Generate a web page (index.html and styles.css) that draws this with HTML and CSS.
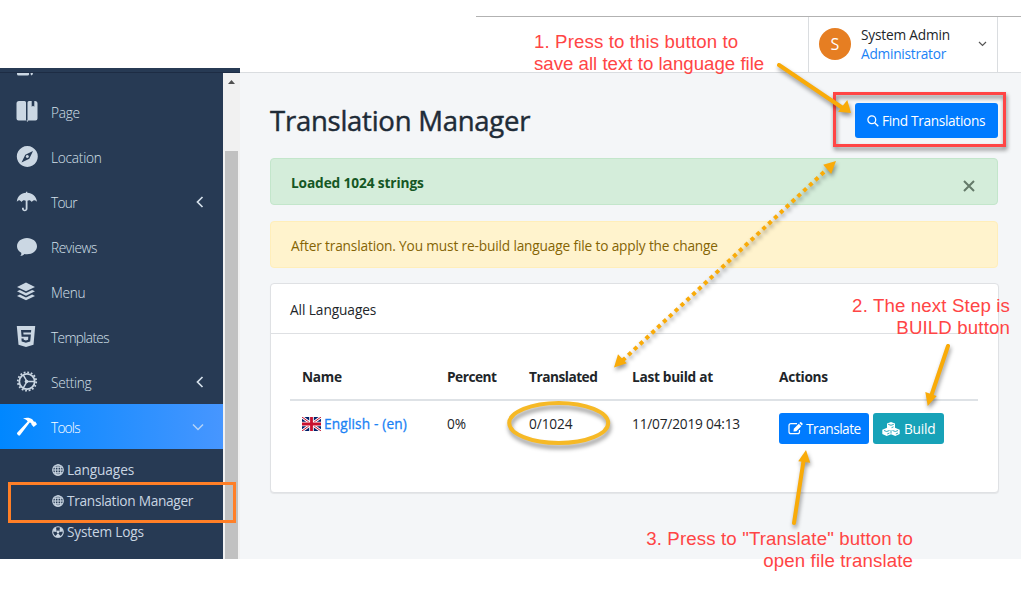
FILE: index.html
```html
<!DOCTYPE html>
<html lang="en">
<head>
<meta charset="utf-8">
<title>Translation Manager</title>
<link rel="stylesheet" href="styles.css">
</head>
<body>
<div class="page">
  <aside class="sidebar">
    <div class="sidebar-top"></div>
    <div class="sidebar-body">
      <nav class="menu">
        <div class="menu-clip"><svg width="22" height="4" viewBox="0 0 22 4"><path d="M1 0h12v1.500q0 1-1.500 1H2.500Q1 2.500 1 1zM14.500 0h2.500q0 2-2 2.500z"/></svg></div>
        <a class="item"><svg class="icon" viewBox="0 0 22 21"><path d="M3 0h5.500q1.500 0 1.500 1.500V19.500H2.500Q.5 19.500 .5 17.500V2.500Q.5 0 3 0zM13 0h2.700v5.800l1.300-1 1.300 1V0H19q2.500 0 2.500 2.500v15q0 2-2 2H12.300l-1 1.500-1-1.500h1.200V1.500Q11.500 0 13 0z"/></svg><span class="t-page">Page</span></a>
        <a class="item"><svg class="icon" viewBox="0 0 22 21"><path fill-rule="evenodd" d="M11.300 0a10.500 10.500 0 1 0 .01 0zM17 5l-3.700 7.700L5.500 16.500l3.800-7.800zM11.300 9a1.500 1.500 0 1 0 .01 0z"/></svg><span class="t-location">Location</span></a>
        <a class="item"><svg class="icon" viewBox="0 0 22 21"><path d="M10 1.800V.8h1.300v1c5 .3 9 3.500 9.700 9-.8-1-1.600-1.500-2.500-1.500s-2 .5-2.700 1.700c-.8-1.100-1.800-1.700-2.700-1.700-.7 0-1.300.3-1.600.5v8c0 3.300-5.500 3.300-5.500 0v-1h1.800v1c0 1.300 1.900 1.300 1.900 0v-8c-.4-.3-1-.5-1.600-.5-.9 0-1.900.6-2.600 1.700C4.700 9.800 3.800 9.300 3 9.300S1.500 9.800.8 10.800c.5-5.500 4.400-8.700 9.200-9z"/></svg><span class="t-tour">Tour</span><svg class="chev" viewBox="0 0 8 12"><path d="M6.500 1 1.500 6l5 5"/></svg></a>
        <a class="item"><svg class="icon" viewBox="0 0 22 21"><path d="M11 2c5.500 0 10 3.600 10 8.200s-4.500 8-10 8c-1 0-1.700-.1-2.500-.3-1 1.200-2.600 2.100-4.200 2.100 1-1 1.200-2 .9-3.200C2.600 15.200 1 13 1 10.200 1 5.600 5.500 2 11 2z"/></svg><span class="t-reviews">Reviews</span></a>
        <a class="item"><svg class="icon" viewBox="0 0 22 21"><path d="m10 1.500 9 4.400-9 4.400-9-4.400zM1 10.300l2.900-1.400L10 11.900l6.100-3 2.900 1.400-9 4.400zM1 14.900l2.900-1.400 6.100 3 6.100-3 2.900 1.400-9 4.400z"/></svg><span class="t-menu">Menu</span></a>
        <a class="item"><svg class="icon" viewBox="0 0 22 21"><path fill-rule="evenodd" d="M.8 0h18.400l-1.700 18.800L10 21l-7.500-2.200zM5 4l.6 6.800h6.700l-.2 3-2.200.7-2.200-.7-.1-1.400H5.400l.3 3 4.200 1.300 4.300-1.300.7-7H7.500l-.2-2H15L15.200 4z"/></svg><span class="t-templates">Templates</span></a>
        <a class="item"><svg class="icon" viewBox="0 0 22 21"><circle class="teeth" cx="11" cy="10.500" r="9.200"/><circle class="ring" cx="11" cy="10.500" r="7.700"/><path class="spokes" d="M11 10.500h7.700M11 10.500 7.200 3.800M11 10.500l-3.800 6.700"/><circle cx="10.500" cy="10.500" r="1.800"/></svg><span class="t-setting">Setting</span><svg class="chev" viewBox="0 0 8 12"><path d="M6.500 1 1.500 6l5 5"/></svg></a>
        <a class="item active"><svg class="icon" viewBox="0 0 22 21"><path d="M7 2.500c3.500-1.500 7-1 9.500 1l1.500 2.200 1.200-.1 1.800 2.600-3.300 2.800-2.200-2.500-.4-1.500-1.400-.4L4 19.300q-.9.800-1.700 0l-1-1.100q-.8-.8.1-1.600L11.700 5.500C10.500 3.500 9 3 7 2.500z"/></svg><span class="t-tools">Tools</span><svg class="chev down" viewBox="0 0 12 8"><path d="m1 1.500 5 5 5-5"/></svg></a>
        <div class="submenu">
          <a><svg class="globe" viewBox="0 0 12 12"><circle cx="6" cy="6" r="5.300"/><ellipse cx="6" cy="6" rx="2.800" ry="5.300"/><path d="M6 .7v10.600M.7 6h10.600M1.700 3.200h8.600M1.700 8.800h8.600"/></svg><span class="t-languages">Languages</span></a>
          <a><svg class="globe" viewBox="0 0 12 12"><circle cx="6" cy="6" r="5.300"/><ellipse cx="6" cy="6" rx="2.800" ry="5.300"/><path d="M6 .7v10.600M.7 6h10.600M1.700 3.200h8.600M1.700 8.800h8.600"/></svg><span class="t-manager">Translation Manager</span></a>
          <a><svg class="globe" viewBox="0 0 12 12"><circle cx="6" cy="6" r="5.300"/><path class="solid" d="M4.700 6 .8 5.500A5.300 5.300 0 0 1 4 1.200zM7.300 6l3.900-.5A5.300 5.300 0 0 0 8 1.200zM6 7l3 3.700q-3 1.500-6 0z"/><circle class="solid" cx="6" cy="5.900" r="1.300"/></svg><span class="t-logs">System Logs</span></a>
        </div>
      </nav>
      <div class="scrollbar"><div class="scroll-up"></div><div class="thumb"></div></div>
    </div>
  </aside>
  <div class="main">
    <header class="topbar">
      <div class="user">
        <div class="avatar">S</div>
        <div class="who"><span class="t-user">System Admin</span><span class="role">Administrator</span></div>
        <svg class="caret" viewBox="0 0 9 6"><path d="m1 1 3.500 3.500L8 1"/></svg>
      </div>
    </header>
    <main class="content">
      <div class="title-row">
        <h1>Translation Manager</h1>
        <button class="btn find"><svg width="12" height="12" viewBox="0 0 12 12"><circle cx="4.800" cy="4.800" r="3.900"/><path d="m7.700 7.700 3.600 3.600"/></svg><span class="t-find">Find Translations</span></button>
      </div>
      <div class="alert success"><strong>Loaded 1024 strings</strong><svg width="12" height="12" viewBox="0 0 12 12"><path d="m1 1 10 10M11 1 1 11"/></svg></div>
      <div class="alert warning"><span>After translation. You must re-build language file to apply the change</span></div>
      <section class="card">
        <div class="card-head"><span class="t-all">All Languages</span></div>
        <div class="card-body">
          <div class="row head"><span class="h-name">Name</span><span class="h-percent">Percent</span><span class="h-trans">Translated</span><span class="h-last">Last build at</span><span class="h-act">Actions</span></div>
          <div class="row data">
            <a class="lang"><svg width="19" height="14" viewBox="0 0 19 14"><path fill="#012169" d="M0 0h19v14H0z"/><path stroke="#fff" stroke-width="2.800" d="m0 0 19 14M19 0 0 14"/><path stroke="#c8102e" stroke-width="1" d="m0 0 19 14M19 0 0 14"/><path stroke="#fff" stroke-width="4.600" d="M9.500 0v14M0 7h19"/><path stroke="#c8102e" stroke-width="2.800" d="M9.500 0v14M0 7h19"/></svg><span class="t-english">English - (en)</span></a>
            <span>0%</span><span class="t-count">0/1024</span><span class="t-date">11/07/2019 04:13</span>
            <div class="actions">
              <button class="btn small translate"><svg width="15" height="13" viewBox="0 0 15 13"><path class="line" d="M9 1.700H3Q1 1.700 1 3.700v6q0 2 2 2h6.500q2 0 2-2V8"/><path class="solid" d="m5.500 9.500.3-2.800 5-5 2.500 2.500-5 5zM11.400 1.100l.8-.8q.5-.4 1 0l1.300 1.300q.5.500 0 1l-.7.900z"/></svg><span class="t-translate">Translate</span></button>
              <button class="btn small build"><svg width="18" height="14" viewBox="0 0 18 14"><path class="solid" d="m9 0 4 1.600v4.100l4.700 2v4.200L13.300 14 9 12.200 4.700 14 .3 11.900V7.700L5 5.700V1.600z"/><path class="cut" d="m6.200 2.300 2.800 1 2.800-1M9.500 5.700l2-.8M2 8.500l2.700 1 2.800-1M5.200 12l2.200-1M10.500 8.500l2.800 1 2.700-1M13.800 12l2.200-1M9 8.200v3.300"/></svg><span class="t-build">Build</span></button>
            </div>
          </div>
        </div>
      </section>
    </main>
  </div>
</div>
<div class="outline menu-outline"></div>
<div class="outline find-outline"></div>
<svg class="arrows" viewBox="0 0 1029 605">
  <g class="arrow"><path d="m779 65 63 42.500"/><path class="tip" d="m851 113-13-1.300 9.300-11.700z"/></g>
  <g class="arrow"><path d="m948 346-16.500 49"/><path class="tip" d="m927.700 406-2.400-14 11.400 4z"/></g>
  <g class="arrow"><path d="m794 523 9.500-62"/><path class="tip" d="m806 450 4.200 12.800-12-1.600z"/></g>
  <g class="arrow"><path class="dots" d="M824 172 622 361"/><path class="tip" d="m836 161-4.800 13-8-9.300zM614 367.500l4-13.200 8.700 9z"/></g>
  <ellipse class="ring-mark" cx="558.700" cy="423" rx="49.500" ry="20"/>
</svg>
<p class="note one"><span>1. Press to this button to</span><br>save all text to language file</p>
<p class="note two">2. The next Step is<br>BUILD button</p>
<p class="note three">3. Press to "Translate" button to<br>open file translate</p>
</body>
</html>
```

FILE: styles.css
```css
* { box-sizing: border-box; }
body { margin: 0; width: 1029px; height: 605px; position: relative; overflow: hidden; background: #fff; color: #212529; font: 13.7px "Open Sans", "Noto Sans", sans-serif; }
svg { display: block; flex: none; }
span, strong, h1 { white-space: nowrap; }
.page { display: grid; grid-template-columns: 240px 781px; height: 559px; }

.sidebar { display: flex; flex-direction: column; padding-top: 68px; height: 559px; }
.sidebar-top { height: 5px; background: #273a54; border-bottom: 1px solid #1d2c44; }
.sidebar-body { display: flex; height: 486px; background: #273a54; }
.menu { width: 223px; overflow: hidden; font-weight: 300; color: #d5e0eb; }
.menu-clip { height: 16px; padding-left: 16px; }
.menu-clip svg { fill: #cbd7e3; }
.item { display: flex; align-items: center; height: 45px; padding: 0 19px 0 16px; }
.item span { padding-top: 1px; }
.icon { width: 22px; height: 21px; margin-right: 13px; fill: #cbd7e3; }
.teeth, .ring, .spokes { fill: none; stroke: #cbd7e3; }
.teeth { stroke-width: 1.800; stroke-dasharray: 1.800 1.812; }
.ring { stroke-width: 1.800; }
.spokes { stroke-width: 1.500; }
.chev { width: 8px; height: 12px; margin-left: auto; fill: none; stroke: #d5e0eb; stroke-width: 1.700; }
.chev.down { width: 12px; height: 8px; stroke: #b5d3f7; stroke-width: 1.500; }
.active { background: linear-gradient(90deg, #0087ff, #4796ff); color: #fff; }
.active .icon { fill: #fff; }
.t-page { letter-spacing: -.3px; }
.t-location { letter-spacing: -.25px; }
.t-tour { letter-spacing: -.7px; }
.t-reviews { letter-spacing: -.4px; }
.t-menu { letter-spacing: -.3px; }
.t-templates { letter-spacing: -.65px; }
.t-setting { letter-spacing: -.3px; }
.t-tools { letter-spacing: -.8px; }
.submenu { padding: 5px 0 0 52px; font-weight: 400; color: #c9d5e2; }
.submenu a { display: flex; align-items: center; height: 31px; gap: 3px; }
.t-languages { letter-spacing: -.12px; }
.t-manager { letter-spacing: -.3px; }
.t-logs { letter-spacing: -.2px; }
.globe { width: 12px; height: 12px; fill: none; stroke: #c9d5e2; stroke-width: 1.100; }
.globe .solid { fill: #c9d5e2; stroke: none; }
.scrollbar { width: 17px; background: #f1f1f1; padding: 7px 2px 0; }
.scroll-up { width: 7px; height: 4px; margin: 0 auto; background: #505050; clip-path: polygon(50% 0, 100% 100%, 0 100%); }
.thumb { margin-top: 67px; height: 408px; background: #c1c1c1; }

.main { display: flex; flex-direction: column; padding-top: 16px; }
.topbar { height: 57px; display: flex; justify-content: flex-end; padding: 1px 23px 0 0; border-bottom: 1px solid #dadde0; background: linear-gradient(#b2b2b2, #b2b2b2) 236px 0 / 545px 1px no-repeat #fff; }
.user { width: 190px; display: flex; align-items: center; padding: 0 10px 1px; border: solid #dadde0; border-width: 0 1px; }
.avatar { width: 32px; height: 32px; border-radius: 50%; background: #e67e22; color: #fff; font-size: 16px; line-height: 33px; text-align: center; }
.who { display: flex; flex-direction: column; margin-left: 10px; line-height: 19px; }
.t-user { letter-spacing: -.2px; }
.role { color: #1a82f5; letter-spacing: -.25px; }
.caret { width: 9px; height: 6px; margin-left: auto; fill: none; stroke: #555; stroke-width: 1.200; }
.content { flex: 1; background: #f4f6f8; padding: 30px 22px 0 30px; }
.title-row { display: flex; justify-content: space-between; height: 55px; padding-right: 1px; }
h1 { margin: 0; font-size: 27.500px; font-weight: 500; line-height: 36px; letter-spacing: -.25px; color: #1e2b37; -webkit-text-stroke: .45px #1e2b37; }
.btn { display: flex; align-items: center; border: 0; border-radius: 3px; color: #fff; font: inherit; padding: 0; }
.btn svg { fill: none; stroke: #fff; }
.btn .solid { fill: #fff; stroke: none; }
.find { width: 143px; height: 35px; padding-left: 12px; gap: 3px; background: #007bff; letter-spacing: -.35px; }
.find svg { stroke-width: 1.300; }
.alert { height: 47px; width: 728px; display: flex; align-items: center; justify-content: space-between; padding: 0 22px 0 20px; border: 1px solid; border-radius: 4px; }
.alert svg { margin-top: 9px; stroke: #647a69; stroke-width: 2; }
.success { background: #d4edda; border-color: #c3e6cb; color: #155724; letter-spacing: -.12px; }
.warning { margin: 16px 0 15px; background: #fff3cd; border-color: #ffeeba; color: #856404; letter-spacing: -.16px; }
.alert span, .alert strong { padding-top: 1px; }
.card { height: 210px; background: #fff; border: 1px solid #dfe1e4; border-radius: 4px; box-shadow: 0 1px 1px #0001; }
.card-head { height: 50px; display: flex; align-items: center; padding: 1px 0 0 19px; border-bottom: 1px solid #dee0e3; letter-spacing: -.08px; }
.card-body { padding: 19px 20px 0 19px; }
.row { display: grid; grid-template-columns: 145px 82px 103px 147px 1fr; padding-left: 12px; align-items: center; }
.head { height: 48px; border-bottom: 2px solid #dee2e6; font-weight: 700; letter-spacing: -.3px; }
.h-percent, .h-trans { letter-spacing: -.5px; }
.data { height: 46px; }
.data > span, .lang { padding-bottom: 1px; }
.lang { display: flex; align-items: center; gap: 3px; color: #1a82f5; letter-spacing: .15px; -webkit-text-stroke: .3px #1a82f5; }
.t-date { letter-spacing: -.2px; }
.t-count { letter-spacing: -.1px; }
.actions { display: flex; gap: 4px; padding-top: 9px; }
.small { height: 31px; }
.translate { width: 90px; padding-left: 9px; gap: 3px; background: #007bff; letter-spacing: -.5px; }
.translate .line { stroke-width: 1.200; }
.build { width: 71px; padding-left: 9px; gap: 4px; background: #17a2b8; letter-spacing: -.25px; }
.build .cut { stroke: #17a2b8; stroke-width: .9; }

.outline { position: absolute; border: 3px solid #ff7f27; }
.menu-outline { left: 8px; top: 482px; width: 228px; height: 41px; }
.find-outline { left: 833px; top: 92px; width: 173px; height: 55px; border-color: #ff4545; filter: drop-shadow(1px 3px 2px #0007); }
.arrows { position: absolute; left: 0; top: 0; width: 1029px; height: 605px; }
.arrow { fill: none; stroke: #f9ab09; stroke-width: 4; stroke-linecap: round; filter: drop-shadow(1px 3px 2px #0006); }
.arrow .tip { fill: #f9ab09; stroke: none; }
.arrow .dots { stroke-linecap: butt; stroke-dasharray: 4 4; }
.ring-mark { fill: none; stroke: #f6b926; stroke-width: 4; filter: drop-shadow(1px 4px 2px #0006); }
.note { position: absolute; margin: 0; font: 18.670px/22px "Liberation Sans", Arial, sans-serif; color: #ff4545; white-space: nowrap; }
.one { left: 534px; top: 31px; }
.one span { letter-spacing: .12px; }
.two { right: 19px; top: 295px; text-align: right; letter-spacing: .14px; }
.three { right: 116px; top: 528px; text-align: right; letter-spacing: .13px; }
```
